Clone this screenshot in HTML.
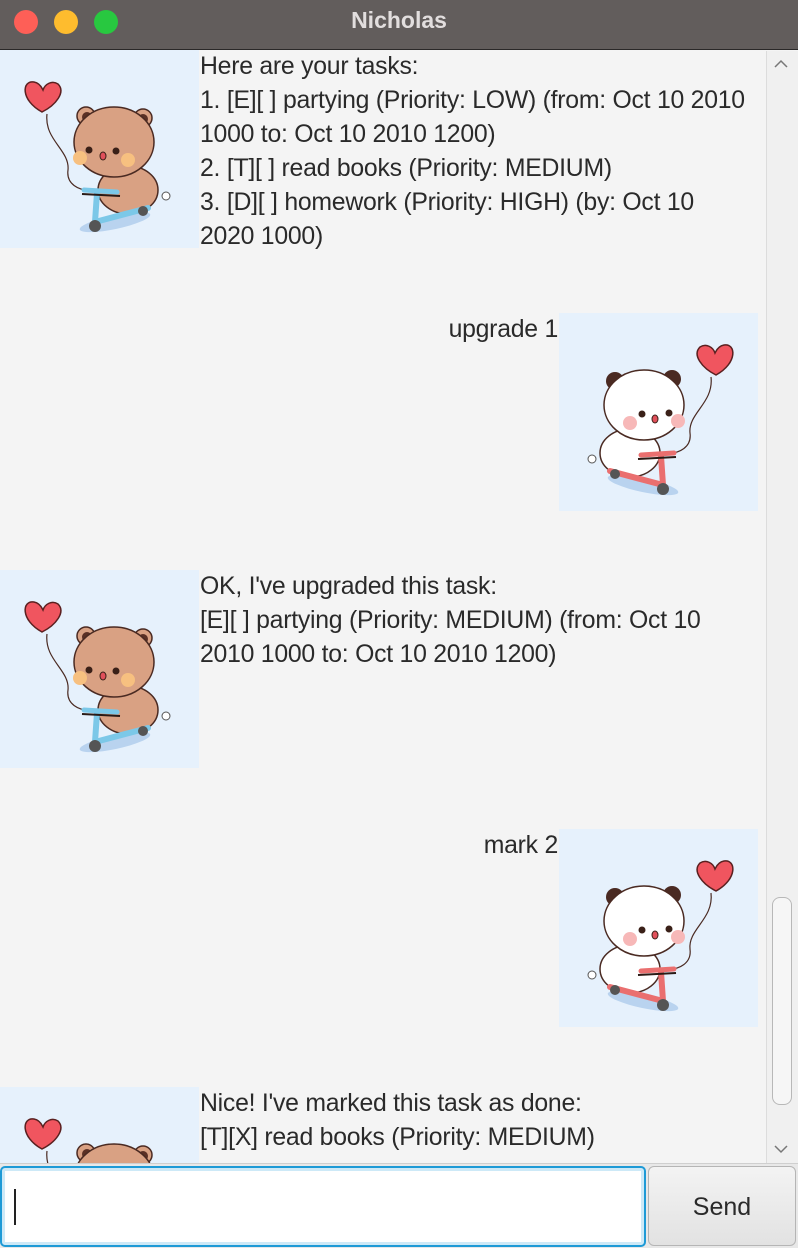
<!DOCTYPE html>
<html><head><meta charset="utf-8"><style>
*{margin:0;padding:0;box-sizing:border-box}
html,body{width:798px;height:1248px;overflow:hidden}
body{background:#f4f4f4;font-family:"Liberation Sans",sans-serif;position:relative}
.title{position:absolute;left:0;top:0;width:798px;height:50px;background:#625d5c;border-bottom:1px solid #2a2828}
.title .t{position:absolute;left:0;right:0;top:7px;text-align:center;color:#e2dede;font-weight:bold;font-size:23px}
.dot{position:absolute;top:10px;width:24px;height:24px;border-radius:50%}
.img{position:absolute;width:199px;height:198px;background:#e6f1fc;overflow:hidden}
.txt{position:absolute;font-size:24.8px;line-height:34px;color:#2a2a2a;white-space:nowrap;letter-spacing:-0.25px}
.sb{position:absolute;left:766px;top:51px;width:32px;height:1112px;background:#f0f0f0;border-left:1px solid #dcdcdc}
.thumb{position:absolute;left:772px;top:897px;width:20px;height:208px;border:1px solid #b8b8b8;border-radius:8px;background:#f6f6f6}
.bottom{position:absolute;left:0;top:1163px;width:798px;height:85px;background:#e8e8e8;border-top:1px solid #cfcfcf}
.inp{position:absolute;left:0;top:1166px;width:646px;height:81px;background:#fff;border:2px solid #1e9ad6;border-radius:5px;box-shadow:inset 0 0 0 3px #cde9f7}
.caret{position:absolute;left:14px;top:1189px;width:2px;height:36px;background:#222}
.btn{position:absolute;left:648px;top:1166px;width:148px;height:80px;background:linear-gradient(#f3f3f3,#e2e2e2);border:1px solid #b5b5b5;border-radius:6px;font-size:25px;color:#2a2a2a;text-align:center;line-height:80px}
</style></head><body>
<svg width="0" height="0" style="position:absolute"><defs>
<g id="bear">
<ellipse cx="115" cy="172" rx="36" ry="7" fill="#b9d3ef" transform="rotate(-12 115 172)"/>
<path d="M47 64 C44 90 70 100 68 120 C66 135 80 140 88 140" stroke="#4a2a22" stroke-width="1.2" fill="none"/>
<path d="M42 62 C20 50 22 30 34 32 C40 33 42 38 43 40 C45 34 52 30 58 34 C66 42 56 55 42 62Z" fill="#f0555f" stroke="#5a2020" stroke-width="1.5"/>
<ellipse cx="128" cy="140" rx="30" ry="24" fill="#d9a183" stroke="#4a2a22" stroke-width="1.5"/>
<circle cx="86" cy="66" r="9" fill="#d9a183" stroke="#4a2a22" stroke-width="1.5"/><circle cx="87" cy="67" r="5" fill="#5a3025"/>
<circle cx="143" cy="68" r="9" fill="#d9a183" stroke="#4a2a22" stroke-width="1.5"/><circle cx="143" cy="69" r="5" fill="#5a3025"/>
<ellipse cx="114" cy="92" rx="40" ry="35" fill="#d9a183" stroke="#4a2a22" stroke-width="1.5"/>
<circle cx="80" cy="108" r="7" fill="#f7c080"/><circle cx="128" cy="110" r="7" fill="#f7c080"/>
<circle cx="89" cy="100" r="3.5" fill="#3a2018"/><circle cx="116" cy="101" r="3.5" fill="#3a2018"/>
<ellipse cx="103" cy="106" rx="3" ry="4" fill="#e0505a" stroke="#3a2018"/>
<path d="M97 143 L95 172 M95 172 L148 158" stroke="#7cc8e8" stroke-width="6" stroke-linecap="round" fill="none"/>
<path d="M84 140 L117 142" stroke="#7cc8e8" stroke-width="5" stroke-linecap="round"/>
<path d="M82 144 L120 146" stroke="#2a1a15" stroke-width="2"/>
<circle cx="95" cy="176" r="6" fill="#555"/><circle cx="143" cy="161" r="5" fill="#555"/>
<circle cx="166" cy="146" r="4" fill="#fff" stroke="#555"/>
</g>
<g id="panda">
<ellipse cx="115" cy="172" rx="36" ry="7" fill="#b9d3ef" transform="rotate(-12 115 172)"/>
<path d="M47 64 C44 90 70 100 68 120 C66 135 80 140 88 140" stroke="#4a2a22" stroke-width="1.2" fill="none"/>
<path d="M42 62 C20 50 22 30 34 32 C40 33 42 38 43 40 C45 34 52 30 58 34 C66 42 56 55 42 62Z" fill="#f0555f" stroke="#5a2020" stroke-width="1.5"/>
<ellipse cx="128" cy="140" rx="30" ry="24" fill="#fff" stroke="#4a2a22" stroke-width="1.5"/>
<circle cx="86" cy="66" r="9" fill="#4a2a22"/><circle cx="143" cy="68" r="9" fill="#4a2a22"/>
<ellipse cx="114" cy="92" rx="40" ry="35" fill="#fff" stroke="#4a2a22" stroke-width="1.5"/>
<circle cx="80" cy="108" r="7" fill="#f7b8b8"/><circle cx="128" cy="110" r="7" fill="#f7b8b8"/>
<circle cx="89" cy="100" r="3.5" fill="#3a2018"/><circle cx="116" cy="101" r="3.5" fill="#3a2018"/>
<ellipse cx="103" cy="106" rx="3" ry="4" fill="#e0505a" stroke="#3a2018"/>
<path d="M97 143 L95 172 M95 172 L148 158" stroke="#ea6f6f" stroke-width="6" stroke-linecap="round" fill="none"/>
<path d="M84 140 L117 142" stroke="#ea6f6f" stroke-width="5" stroke-linecap="round"/>
<path d="M82 144 L120 146" stroke="#2a1a15" stroke-width="2"/>
<circle cx="95" cy="176" r="6" fill="#555"/><circle cx="143" cy="161" r="5" fill="#555"/>
<circle cx="166" cy="146" r="4" fill="#fff" stroke="#555"/>
</g></defs></svg>

<div class="title"><div class="dot" style="left:14px;background:#fe5f57"></div><div class="dot" style="left:54px;background:#febc2e"></div><div class="dot" style="left:94px;background:#28c840"></div><div class="t">Nicholas</div></div>

<div class="img" style="left:0;top:50px"><svg width="199" height="198"><use href="#bear"/></svg></div>
<div class="txt" style="left:200px;top:50px">Here are your tasks:<br>1. [E][ ] partying (Priority: LOW) (from: Oct 10 2010<br>1000 to: Oct 10 2010 1200)<br>2. [T][ ] read books (Priority: MEDIUM)<br>3. [D][ ] homework (Priority: HIGH) (by: Oct 10<br>2020 1000)</div>

<div class="txt" style="right:240px;top:313px">upgrade 1</div>
<div class="img" style="left:559px;top:313px"><svg width="199" height="198"><g transform="translate(199 0) scale(-1 1)"><use href="#panda"/></g></svg></div>

<div class="img" style="left:0;top:570px"><svg width="199" height="198"><use href="#bear"/></svg></div>
<div class="txt" style="left:200px;top:570px">OK, I've upgraded this task:<br>[E][ ] partying (Priority: MEDIUM) (from: Oct 10<br>2010 1000 to: Oct 10 2010 1200)</div>

<div class="txt" style="right:240px;top:829px">mark 2</div>
<div class="img" style="left:559px;top:829px"><svg width="199" height="198"><g transform="translate(199 0) scale(-1 1)"><use href="#panda"/></g></svg></div>

<div class="img" style="left:0;top:1087px;height:76px"><svg width="199" height="198"><use href="#bear"/></svg></div>
<div class="txt" style="left:200px;top:1087px">Nice! I've marked this task as done:<br>[T][X] read books (Priority: MEDIUM)</div>

<div class="sb"></div>
<div class="thumb"></div>
<svg style="position:absolute;left:772px;top:58px" width="18" height="12"><path d="M3 9 L9 3 L15 9" stroke="#777" stroke-width="1.5" fill="none"/></svg>
<svg style="position:absolute;left:772px;top:1143px" width="18" height="12"><path d="M3 3 L9 9 L15 3" stroke="#777" stroke-width="1.5" fill="none"/></svg>

<div class="bottom"></div>
<div class="inp"></div>
<div class="caret"></div>
<div class="btn">Send</div>
</body></html>
